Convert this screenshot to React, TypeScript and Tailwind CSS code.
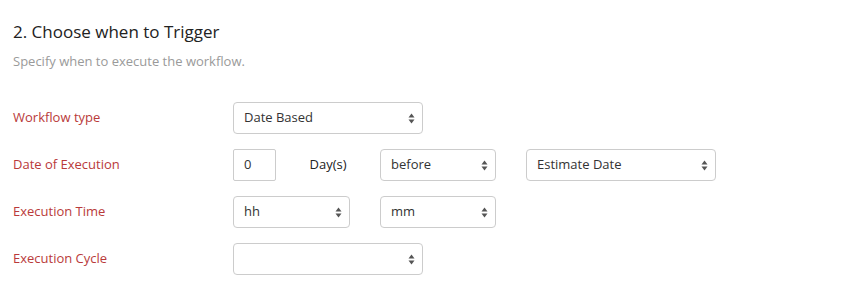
import React from "react";

function Arrows() {
  return (
    <svg width="7" height="11" viewBox="0 0 7 11" className="shrink-0">
      <path d="M3.5 0.5 L6.5 4.5 L0.5 4.5 Z" fill="#555" />
      <path d="M3.5 10.5 L6.5 6.5 L0.5 6.5 Z" fill="#555" />
    </svg>
  );
}

function Select({ value, width }: { value: string; width: string }) {
  return (
    <div
      className={`${width} h-[32px] flex items-center justify-between pl-[10px] pr-[7px] border border-[#ccc] rounded-[4px] bg-white text-[13px] text-[#333]`}
    >
      <span>{value}</span>
      <Arrows />
    </div>
  );
}

function Row({ label, children }: { label: string; children: React.ReactNode }) {
  return (
    <div className="flex items-center h-[32px]">
      <div className="w-[220px] text-[13px] text-[#b93a3a]">{label}</div>
      <div className="flex items-center">{children}</div>
    </div>
  );
}

export default function App() {
  return (
    <div
      className="w-[844px] h-[293px] bg-white pl-[13px] pt-[20px]"
      style={{ fontFamily: '"Open Sans", "Liberation Sans", sans-serif' }}
    >
      <h2 className="text-[17px] leading-[24px] text-[#222]">2. Choose when to Trigger</h2>
      <p className="mt-[8px] text-[13px] leading-[18px] text-[#9a9a9a]">
        Specify when to execute the workflow.
      </p>

      <div className="mt-[32px] flex flex-col gap-[15px]">
        <Row label="Workflow type">
          <Select value="Date Based" width="w-[190px]" />
        </Row>
        <Row label="Date of Execution">
          <div className="w-[43px] h-[32px] flex items-center pl-[10px] border border-[#ccc] rounded-[2px] text-[13px] text-[#333]">
            0
          </div>
          <div className="w-[104px] text-center text-[13px] text-[#222]">Day(s)</div>
          <Select value="before" width="w-[116px]" />
          <div className="w-[30px]" />
          <Select value="Estimate Date" width="w-[190px]" />
        </Row>
        <Row label="Execution Time">
          <Select value="hh" width="w-[117px]" />
          <div className="w-[30px]" />
          <Select value="mm" width="w-[116px]" />
        </Row>
        <Row label="Execution Cycle">
          <Select value="" width="w-[190px]" />
        </Row>
      </div>
    </div>
  );
}
